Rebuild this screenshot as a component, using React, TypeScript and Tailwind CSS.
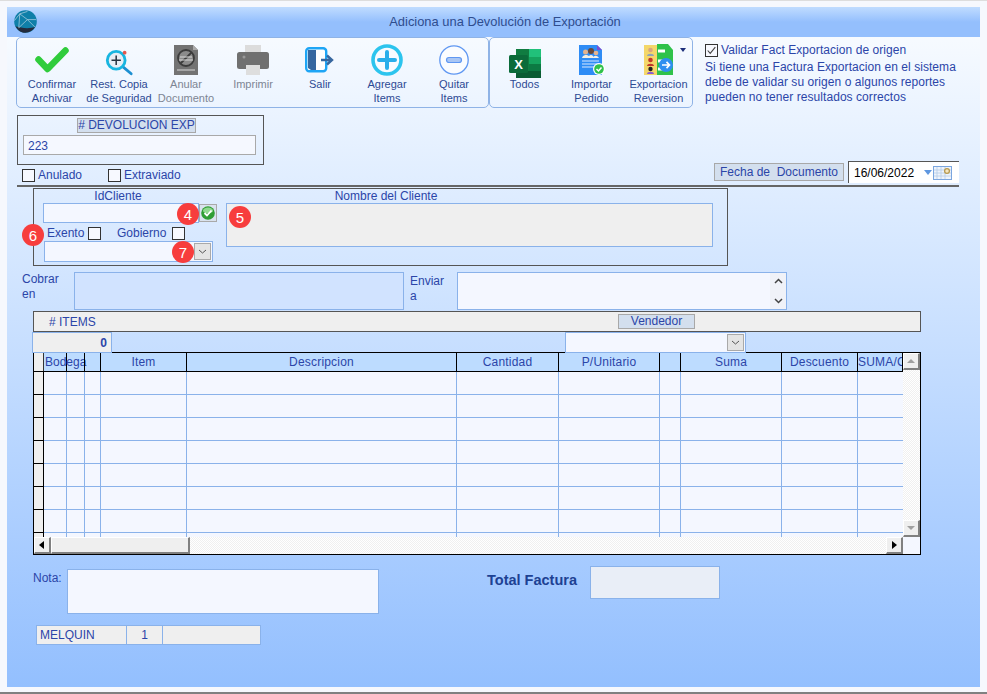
import type { ReactNode } from 'react'

const GRID_COLS = 'grid grid-cols-[10px_23px_18px_16px_86px_270px_102px_101px_21px_101px_76px_45px]'

const HEADERS = ['', 'Bodega', '', '', 'Item', 'Descripcion', 'Cantidad', 'P/Unitario', '', 'Suma', 'Descuento', 'SUMA/C']

function Badge({ n, className }: { n: number; className: string }) {
  return (
    <span className={`absolute flex h-[22px] w-[22px] items-center justify-center rounded-full bg-[#f73d3d] text-[15px] leading-none text-white ${className}`}>
      {n}
    </span>
  )
}

function Check({ on = false }: { on?: boolean }) {
  return (
    <span className="flex h-[13px] w-[13px] shrink-0 items-center justify-center border border-[#333] bg-[#f7f9ff]">
      {on && (
        <svg viewBox="0 0 13 13" className="h-[11px] w-[11px]">
          <path d="M2 6.5 5 10 11 2.5" fill="none" stroke="#444" strokeWidth="1.3" />
        </svg>
      )}
    </span>
  )
}

function ComboButton() {
  return (
    <span className="flex h-[17px] w-[17px] shrink-0 items-center justify-center border border-[#a9a9a9] bg-[#e4e4e4]">
      <svg viewBox="0 0 9 5" className="h-[5px] w-[9px]">
        <path d="M1 1l3.5 3L8 1" fill="none" stroke="#555" strokeWidth="1" />
      </svg>
    </span>
  )
}

function ToolButton({ icon, lines, muted = false }: { icon: ReactNode; lines: string[]; muted?: boolean }) {
  return (
    <div className={`flex w-[67px] shrink-0 flex-col items-center ${muted ? 'text-[#7d8593]' : 'text-[#2d4a94]'}`}>
      <div className="flex h-[38px] w-full items-center justify-center pt-[4px]">{icon}</div>
      {lines.map((l) => (
        <span key={l} className="whitespace-nowrap text-[11px] leading-[14px]">{l}</span>
      ))}
    </div>
  )
}

function Globe() {
  return (
    <svg viewBox="0 0 24 24" className="h-[23px] w-[23px]">
      <circle cx="12" cy="12" r="11.800" fill="#0f7fa8" />
      <path d="M1.500 17C5 23 9 24 12 23.800c4-.2 8-2.500 10-6.300C16 20 8 19 1.500 17z" fill="#232b3d" />
      <path d="M.5 11 6 4l8-2.500M6 4l8 6 9 0M14 10l8 8M14 10 5 18.500M6 4 5 18.500" fill="none" stroke="#bcd6e6" strokeWidth=".7" />
    </svg>
  )
}

function ConfirmIcon() {
  return (
    <svg viewBox="0 0 36 28" className="h-[28px] w-[36px]">
      <path d="M4.500 13.500 13.500 23 31.500 4.500" fill="none" stroke="#30cc3c" strokeWidth="6.500" strokeLinecap="round" strokeLinejoin="round" />
    </svg>
  )
}

function SearchIcon() {
  return (
    <svg viewBox="0 0 32 32" className="mt-[5px] h-[30px] w-[30px]">
      <path d="M19 19l10 8.500" stroke="#1d8fd1" strokeWidth="3" strokeLinecap="round" />
      <circle cx="13" cy="13" r="9.500" fill="#e8eef5" stroke="#18b5e0" strokeWidth="3" />
      <path d="M13 8v10M8 13h10" stroke="#26323f" strokeWidth="1.600" />
      <circle cx="22" cy="5" r="2" fill="#e4574c" />
    </svg>
  )
}

function VoidIcon() {
  return (
    <svg viewBox="0 0 24 30" className="h-[30px] w-[24px]">
      <path d="M0 0h19l5 5v25H0z" fill="#737373" />
      <path d="M19 0l5 5h-5z" fill="#a9a9a9" />
      <circle cx="12" cy="13" r="8" fill="#8b8b8b" stroke="#3c3c3c" strokeWidth="1.800" />
      <path d="M6.500 18.500 17.500 7.500" stroke="#3c3c3c" strokeWidth="1.800" />
      <path d="M6 12h12M5 15h14M3 25h18" stroke="#d8d8d8" strokeWidth="1" />
    </svg>
  )
}

function PrinterIcon() {
  return (
    <svg viewBox="0 0 32 30" className="h-[30px] w-[32px]">
      <rect x="8" y="0" width="16" height="8" fill="#dcdcdc" />
      <rect x="0" y="7" width="32" height="17" rx="2.500" fill="#707070" />
      <circle cx="7" cy="12" r="1.500" fill="#999" />
      <rect x="9" y="20" width="14" height="10" fill="#dedede" />
    </svg>
  )
}

function ExitIcon() {
  return (
    <svg viewBox="0 0 30 26" className="h-[26px] w-[30px]">
      <rect x="1.200" y="1.200" width="20" height="23" rx="3" fill="#fff" stroke="#1ea5f5" strokeWidth="2.400" />
      <path d="M3 3h7l1 0v20H6l-3-2z" fill="#37679f" />
      <path d="M16 13h10M22 8.500l5 4.500-5 4.500" fill="none" stroke="#37679f" strokeWidth="2.400" />
    </svg>
  )
}

function AddIcon() {
  return (
    <svg viewBox="0 0 32 32" className="h-[32px] w-[32px]">
      <circle cx="16" cy="16" r="14" fill="#f8fbff" stroke="#2cc4ee" strokeWidth="3.600" />
      <path d="M16 8v16M8 16h16" stroke="#2aaeea" strokeWidth="4" strokeLinecap="round" />
    </svg>
  )
}

function RemoveIcon() {
  return (
    <svg viewBox="0 0 30 30" className="h-[30px] w-[30px]">
      <circle cx="15" cy="15" r="14.200" fill="#fafcff" stroke="#5f97f2" strokeWidth="1.300" />
      <rect x="7.500" y="12.500" width="15" height="5" rx="2.500" fill="#a9c6f4" stroke="#5f97f2" strokeWidth="1.200" />
    </svg>
  )
}

function ExcelIcon() {
  return (
    <svg viewBox="0 0 32 30" className="mt-[7px] h-[30px] w-[32px]">
      <rect x="7" y="0" width="25" height="29" fill="#107c41" />
      <rect x="20" y="0" width="12" height="8" fill="#21c17a" />
      <rect x="20" y="8" width="12" height="7" fill="#15a35e" />
      <rect x="20" y="15" width="12" height="7" fill="#0c7a43" />
      <rect x="7" y="22" width="25" height="7" fill="#0a5c33" />
      <rect x="0" y="6" width="19" height="18" rx="1.500" fill="#0b6b3a" />
      <text x="9.500" y="20" textAnchor="middle" fontSize="13" fontWeight="700" fill="#fff" fontFamily="Liberation Sans, sans-serif">X</text>
    </svg>
  )
}

function ImportIcon() {
  return (
    <svg viewBox="0 0 26 30" className="h-[30px] w-[26px]">
      <path d="M0 0h18l5 5v25H0z" fill="#2e8cf5" />
      <path d="M18 0l5 5h-5z" fill="#7a4fd0" />
      <circle cx="6.500" cy="7" r="2.500" fill="#e3b48f" />
      <circle cx="12" cy="6" r="3" fill="#6a4a3a" />
      <circle cx="17" cy="8" r="2.300" fill="#e3b48f" />
      <path d="M3 13c1-3 3-3 4-3s3 0 4 3zM9 13c1-4 5-4 6 0zM14 13c1-3 4-3 6 0z" fill="#f4f0e6" />
      <path d="M3 16h17M3 19h17M3 22h12" stroke="#d7e8ff" strokeWidth="1.100" />
      <circle cx="20" cy="24" r="6" fill="#fff" />
      <circle cx="20" cy="24" r="4.800" fill="#2fc24a" />
      <path d="M17.500 24l2 2 3-3.500" fill="none" stroke="#fff" strokeWidth="1.500" />
    </svg>
  )
}

function ExportIcon() {
  return (
    <svg viewBox="0 0 30 32" className="h-[32px] w-[30px]">
      <rect x="0" y="1" width="16" height="30" fill="#f4d76a" />
      <path d="M13 0h11l5 6v25H13z" fill="#2fc24a" />
      <path d="M14 7h7M14 17h5M14 25h6" stroke="#fff" strokeWidth="3" />
      <circle cx="6.500" cy="6" r="2.300" fill="#d9a57e" />
      <path d="M3 12c0-3 7-3 7 0z" fill="#8fa3b8" />
      <circle cx="6.500" cy="16" r="2.300" fill="#c0392b" />
      <path d="M3 22c0-3 7-3 7 0z" fill="#c0392b" />
      <circle cx="6.500" cy="25" r="2.200" fill="#222" />
      <path d="M3 30c0-3 7-3 7 0z" fill="#8a5bd0" />
      <circle cx="22" cy="21" r="7" fill="#2f8ff0" />
      <path d="M18 21h7M22.500 17.800l3 3.200-3 3.200" fill="none" stroke="#fff" strokeWidth="1.700" />
    </svg>
  )
}

function OkIcon() {
  return (
    <svg viewBox="0 0 14 14" className="h-[14px] w-[14px]">
      <circle cx="7" cy="7" r="6.800" fill="#2f9e35" />
      <ellipse cx="7" cy="4.500" rx="5" ry="3" fill="#8fd98f" />
      <path d="M3.500 7l2.500 2.500L10.500 4.500" fill="none" stroke="#fff" strokeWidth="1.800" />
    </svg>
  )
}

function CalendarIcon() {
  return (
    <svg viewBox="0 0 19 14" className="h-[14px] w-[19px]">
      <rect x=".5" y=".5" width="18" height="13" fill="#eef3fb" stroke="#7ba6df" />
      <path d="M4 1v12M8 1v12M12 1v12M1 4h17M1 7h17M1 10h17" stroke="#b4cbe9" strokeWidth=".8" />
      <circle cx="14" cy="5" r="2.400" fill="#f4e6c2" stroke="#b89a4f" strokeWidth="1.300" />
    </svg>
  )
}

function ArrowButton({ dir, muted = false }: { dir: 'up' | 'down' | 'left' | 'right'; muted?: boolean }) {
  const pts = {
    up: 'M1 6h8L5 2z',
    down: 'M1 2h8L5 6z',
    left: 'M7 0v8L2 4z',
    right: 'M3 0v8l5-4z',
  }[dir]
  return (
    <span className="flex h-[17px] w-[17px] shrink-0 items-center justify-center border-r-2 border-b-2 border-t border-l border-r-[#808080] border-b-[#808080] border-t-white border-l-white bg-[#efefef]">
      <svg viewBox="0 0 10 8" className="h-[8px] w-[10px]">
        <path d={pts} fill={muted ? '#a0a0a0' : '#000'} />
      </svg>
    </span>
  )
}

function ItemsGrid() {
  const track = 'bg-[repeating-conic-gradient(#f0f0f0_0%_25%,#ffffff_0%_50%)] bg-size-[2px_2px]'
  return (
    <div className="ml-[26px] flex h-[203px] w-[888px] border border-black bg-[#f4f7ff]">
      <div className="flex w-[869px] flex-col">
        <div className={`${GRID_COLS} h-[19px] border-b border-black bg-[#bddcff]`}>
          {HEADERS.map((h, i) => {
            if (i === 1) {
              // el titulo Bodega pasa por encima de la columna vacia
              return (
                <div key={i} className="whitespace-nowrap border-r border-black pl-px text-left text-[12px] leading-[18px]">
                  {h}
                </div>
              )
            }
            return (
              <div
                key={i}
                className={`overflow-hidden whitespace-nowrap border-r text-center text-[12px] leading-[18px] tracking-[0.2px] ${i === 0 ? 'border-[#333] bg-[#efefef]' : i === 11 ? 'border-black text-left' : 'border-black'}`}
              >
                {h}
              </div>
            )
          })}
        </div>
        <div className="h-[165px] overflow-hidden">
          {[0, 1, 2, 3, 4, 5, 6, 7].map((r) => (
            <div key={r} className={`${GRID_COLS} h-[23px] border-b border-[#8ab2ea]`}>
              {HEADERS.map((_, i) => (
                <div key={i} className={i === 0 ? 'border-r border-black bg-[#efefef] shadow-[0_1px_0_#000]' : i === 11 ? '' : 'border-r border-[#8ab2ea]'} />
              ))}
            </div>
          ))}
        </div>
        <div className={`flex h-[17px] ${track}`}>
          <ArrowButton dir="left" />
          <span className="h-[17px] w-[139px] border-r-2 border-b-2 border-t border-l border-r-[#808080] border-b-[#808080] border-t-white border-l-white bg-[#efefef]" />
          <span className="flex-1" />
          <ArrowButton dir="right" />
        </div>
      </div>
      <div className="flex w-[17px] flex-col">
        <div className={`flex flex-1 flex-col justify-between ${track}`}>
          <ArrowButton dir="up" muted />
          <ArrowButton dir="down" muted />
        </div>
        <div className="h-[17px] bg-[#f4f7ff]" />
      </div>
    </div>
  )
}

export default function App() {
  return (
    <div className="h-[694px] w-[987px] overflow-hidden border-t border-b-2 border-t-[#dddddd] border-b-[#808080] bg-[#f6f8fd] pl-[7px] pt-[6px] font-['Liberation_Sans',Arial,sans-serif] text-[12px] text-[#2b45a8]">
      <div className="h-[680px] w-[973px] bg-linear-to-b from-[#fbfdff] to-[#93bffe]">
        <div className="relative flex h-[30px] items-center justify-center bg-linear-to-b from-[#c0dcff] via-[#94bffd] to-[#94bffd] text-[#2f4d8e]">
          <div className="absolute left-[7px] top-[3px]">
            <Globe />
          </div>
          <span className="ml-[23px] text-[12.900px]">Adiciona una Devolución de Exportación</span>
        </div>

        {/* barra de botones */}
        <div className="flex pl-[9px]">
          <div className="flex h-[71px] w-[473px] rounded-[5px] border border-[#8fb3e6] pl-[1.500px] pt-[1px]">
            <ToolButton icon={<ConfirmIcon />} lines={['Confirmar', 'Archivar']} />
            <ToolButton icon={<SearchIcon />} lines={['Rest. Copia', 'de Seguridad']} />
            <ToolButton icon={<VoidIcon />} lines={['Anular', 'Documento']} muted />
            <ToolButton icon={<PrinterIcon />} lines={['Imprimir']} muted />
            <ToolButton icon={<ExitIcon />} lines={['Salir']} />
            <ToolButton icon={<AddIcon />} lines={['Agregar', 'Items']} />
            <ToolButton icon={<RemoveIcon />} lines={['Quitar', 'Items']} />
          </div>
          <div className="relative flex h-[71px] w-[204px] rounded-[5px] border border-[#8fb3e6] pl-[1px] pt-[1px]">
            <ToolButton icon={<ExcelIcon />} lines={['Todos']} />
            <ToolButton icon={<ImportIcon />} lines={['Importar', 'Pedido']} />
            <ToolButton icon={<ExportIcon />} lines={['Exportacion', 'Reversion']} />
            <span className="absolute right-[6px] top-[10px] h-0 w-0 border-x-[3px] border-t-[4px] border-x-transparent border-t-[#1d2f7a]" />
          </div>
          <div className="ml-[12px] pt-[6px] tracking-[0.06px]">
            <div className="flex items-center gap-[3px] leading-[14px]">
              <Check on />
              <span>Validar Fact Exportacion de origen</span>
            </div>
            <p className="mt-[3px] leading-[15px]">
              Si tiene una Factura Exportacion en el sistema
              <br />
              debe de validar su origen o algunos reportes
              <br />
              pueden no tener resultados correctos
            </p>
          </div>
        </div>

        {/* numero y fecha */}
        <div className="ml-[10px] mt-[7px] flex h-[72px] w-[942px] items-end justify-between border-b-2 border-[#666]">
          <div>
            <div className="flex h-[50px] w-[247px] flex-col items-start border border-[#555] pt-[2px]">
              <span className="ml-[59px] h-[15px] w-[119px] border border-[#a8a8a8] bg-[#d3dfee] text-center leading-[13px]">
                # DEVOLUCION EXP
              </span>
              <div className="ml-[5px] mt-[2px] h-[20px] w-[233px] border border-[#a9a9a9] bg-[#f5f8ff] pl-[4px] leading-[20px]">223</div>
            </div>
            <div className="mb-[3px] mt-[4px] flex h-[13px] items-center pl-[5px] leading-[13px]">
              <Check />
              <span className="ml-[3px] w-[70px]">Anulado</span>
              <Check />
              <span className="ml-[3px]">Extraviado</span>
            </div>
          </div>
          <div className="mb-[2px] flex items-start">
            <span className="mt-[2px] h-[18px] w-[130px] whitespace-pre border border-[#a8a8a8] bg-[#d3dfee] text-center leading-[16px]">Fecha de  Documento</span>
            <div className="ml-[4px] flex h-[22px] w-[111px] items-center border-l border-t border-l-[#555] border-t-[#555] bg-white pl-[5px] text-black">
              <span className="w-[70px]">16/06/2022</span>
              <span className="h-0 w-0 border-x-[4px] border-t-[5px] border-x-transparent border-t-[#5f97e0]" />
              <span className="ml-[1px]"><CalendarIcon /></span>
            </div>
          </div>
        </div>

        {/* cliente */}
        <div className="ml-[26px] mt-[1px] flex h-[78px] w-[695px] border border-[#555] pl-[9px]">
          <div className="relative w-[183px]">
            <div className="w-[150px] text-center leading-[14px]">IdCliente</div>
            <div className="flex items-start">
              <div className="h-[20px] w-[156px] border border-[#8ab2ea] bg-[#f4f7ff]" />
              <span className="mt-px flex h-[18px] w-[18px] items-center justify-center border border-[#a9a9a9] bg-[#d9e2ee]"><OkIcon /></span>
            </div>
            <div className="mt-[3px] flex h-[14px] items-center pl-[4px] leading-[14px]">
              <span className="w-[41px]">Exento</span>
              <Check />
              <span className="ml-[16px] w-[55px]">Gobierno</span>
              <Check />
            </div>
            <div className="ml-[1px] mt-[1px] flex h-[21px] w-[169px] items-center justify-end border border-[#8ab2ea] bg-[#f4f7ff] pr-[1px]">
              <ComboButton />
            </div>
            <Badge n={4} className="left-[134px] top-[14px]" />
            <Badge n={6} className="left-[-21px] top-[35px]" />
            <Badge n={7} className="left-[129px] top-[52px]" />
          </div>
          <div className="relative w-[487px]">
            <div className="w-[320px] text-center leading-[14px]">Nombre del Cliente</div>
            <div className="h-[44px] border border-[#8ab2ea] bg-[#efefef]" />
            <Badge n={5} className="left-[3px] top-[17px]" />
          </div>
        </div>

        {/* cobrar / enviar */}
        <div className="ml-[15px] mt-[6px] flex h-[39px] leading-[15px]">
          <span className="w-[52px]">Cobrar<br />en</span>
          <div className="h-[38px] w-[330px] border border-[#8ab2ea] bg-[#d1e3ff]" />
          <span className="w-[53px] pl-[6px] pt-[2px]">Enviar<br />a</span>
          <div className="flex h-[38px] w-[330px] justify-end border border-[#8ab2ea] bg-[#f4f7ff]">
            <div className="flex w-[16px] flex-col items-center justify-between bg-[#f0f2f8] py-[5px]">
              <svg viewBox="0 0 9 6" className="h-[6px] w-[9px]"><path d="M1 5l3.500-3.500L8 5" fill="none" stroke="#444" strokeWidth="1.500" /></svg>
              <svg viewBox="0 0 9 6" className="h-[6px] w-[9px]"><path d="M1 1l3.500 3.500L8 1" fill="none" stroke="#444" strokeWidth="1.500" /></svg>
            </div>
          </div>
        </div>

        {/* items */}
        <div className="ml-[26px] flex h-[21px] w-[888px] items-center border border-[#555] bg-[#efefef]">
          <span className="ml-[15px] w-[569px]"># ITEMS</span>
          <span className="h-[15px] w-[77px] border border-[#a8a8a8] bg-[#d3dfee] text-center leading-[13px]">Vendedor</span>
        </div>
        <div className="ml-[25px] flex h-[20px] items-start">
          <div className="h-[21px] w-[80px] border border-[#8ab2ea] bg-[#efefef] pr-[4px] text-right font-bold leading-[20px]">0</div>
          <div className="ml-[453px] flex h-[21px] w-[181px] items-center justify-end border border-[#8ab2ea] bg-[#f4f7ff] pr-[1px]">
            <ComboButton />
          </div>
        </div>
        <ItemsGrid />

        {/* pie */}
        <div className="ml-[26px] mt-[14px] flex items-start">
          <span className="w-[34px]">Nota:</span>
          <div className="h-[45px] w-[312px] border border-[#8ab2ea] bg-[#f4f7ff]" />
          <span className="ml-[108px] mt-[1px] w-[103px] text-[14.500px] font-bold text-[#1d4193]">Total Factura</span>
          <div className="mt-[-3px] h-[33px] w-[130px] border border-[#8ab2ea] bg-[#e9eef7]" />
        </div>
        <div className="ml-[29px] mt-[11px] flex h-[20px] leading-[19px]">
          <div className="w-[91px] border border-[#8ab2ea] bg-[#efefef] pl-[3px]">MELQUIN</div>
          <div className="w-[36px] border border-l-0 border-[#8ab2ea] bg-[#efefef] text-center">1</div>
          <div className="w-[98px] border border-l-0 border-[#8ab2ea] bg-[#efefef]" />
        </div>
      </div>
    </div>
  )
}
